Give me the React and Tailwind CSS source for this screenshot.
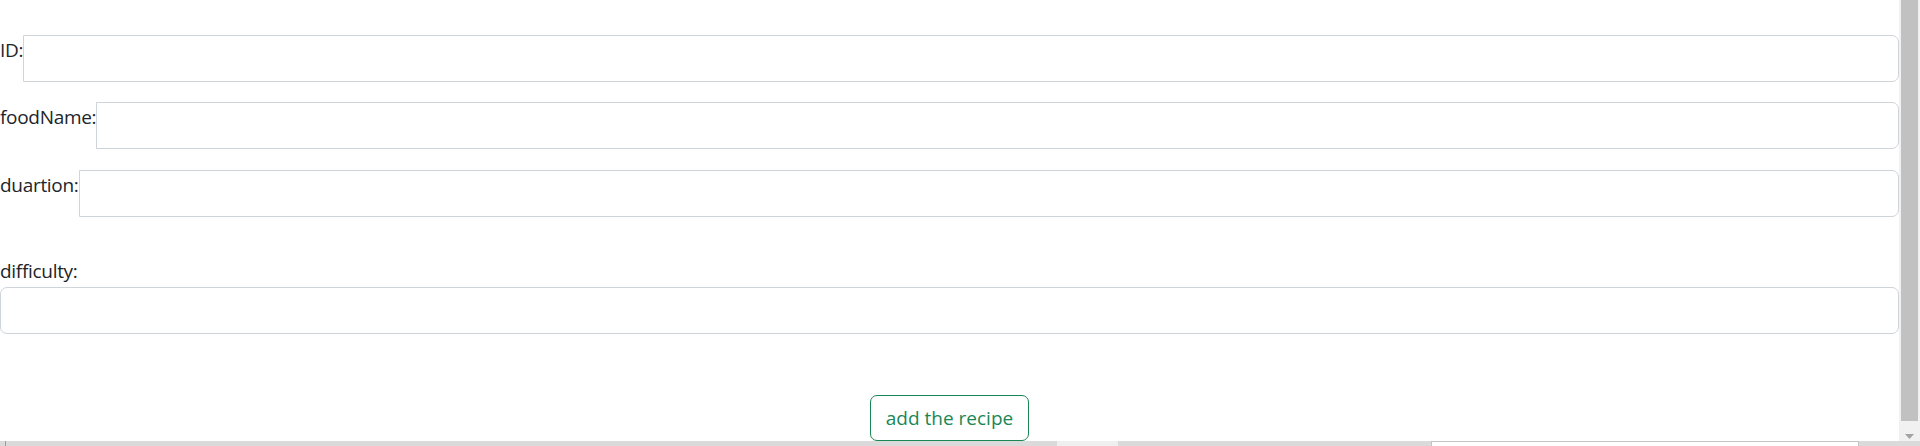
import React from "react";

const font = { fontFamily: '"Segoe UI", "Open Sans", "Noto Sans", sans-serif' };

function Row({ label, mb }) {
  return (
    <div className={`flex items-start ${mb}`}>
      <label className="shrink-0 whitespace-nowrap text-[19px] leading-[30px] tracking-[-0.3px] text-[#212529]">{label}</label>
      <input
        type="text"
        className="h-[47px] min-w-0 flex-1 rounded-r-[7px] border border-[#ced4da] bg-white px-[15px] outline-none"
      />
    </div>
  );
}

export default function App() {
  return (
    <div className="flex h-[446px] w-[1920px] flex-col overflow-hidden bg-white" style={font}>
      <div className="flex h-[441px] w-full">
        <main className="flex w-[1899px] flex-col pt-[35px]">
          <Row label="ID:" mb="mb-[20px]" />
          <Row label="foodName:" mb="mb-[21px]" />
          <Row label="duartion:" mb="mb-[39px]" />
          <label className="block text-[19px] leading-[30px] tracking-[-0.3px] text-[#212529]">difficulty:</label>
          <input
            type="text"
            className="mt-[1px] h-[47px] w-full rounded-[7px] border border-[#ced4da] bg-white px-[15px] outline-none"
          />
          <div className="mt-[61px] flex justify-center">
            <button className="h-[46px] w-[159px] rounded-[7px] border border-[#198754] bg-white text-[19px] leading-[30px] text-[#198754]">
              add the recipe
            </button>
          </div>
        </main>
        <div className="flex w-[21px] flex-col bg-[#f1f1f1] pl-[2px] pr-[2px]">
          <div className="h-[421px] w-[17px] bg-[#c1c1c1]" />
          <div className="flex flex-1 items-end justify-center pb-[2px]">
            <svg width="9" height="5" viewBox="0 0 9 5">
              <polygon points="0,0 9,0 4.5,5" fill="#a3a3a3" />
            </svg>
          </div>
        </div>
      </div>
      <div className="flex h-[5px] w-full bg-[#dadada]">
        <div className="w-[5px]" />
        <div className="w-[1px] bg-[#9c9c9c]" />
        <div className="w-[1051px]" />
        <div className="w-[61px] bg-[#efefef]" />
        <div className="w-[313px]" />
        <div className="w-[428px] border-l border-r border-t border-[#c4c4c4] bg-white" />
        <div className="flex-1" />
      </div>
    </div>
  );
}
